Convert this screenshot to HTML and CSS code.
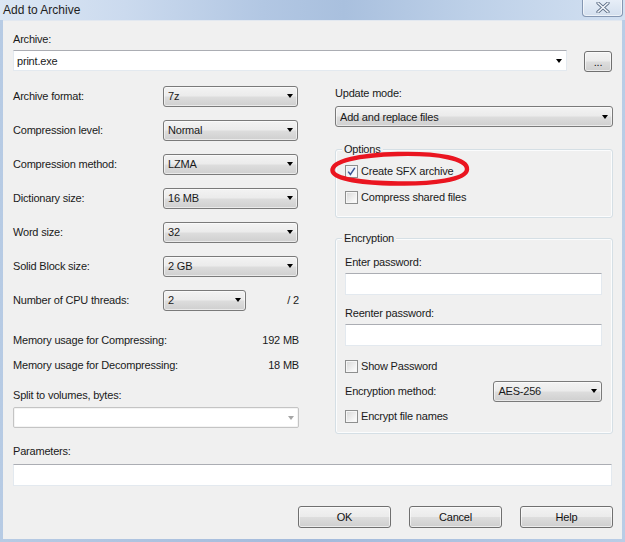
FILE: index.html
```html
<!DOCTYPE html>
<html>
<head>
<meta charset="utf-8">
<link rel="stylesheet" href="styles.css">
</head>
<body>
<div class="window">
  <div class="titlebar">
    <span class="title">Add to Archive</span>
    <div class="close">
      <svg width="14" height="11" viewBox="0 0 14 11"><path d="M2 1 L12 10 M12 1 L2 10" stroke="#5b6c84" stroke-width="3.2" stroke-linecap="round"/><path d="M2 1 L12 10 M12 1 L2 10" stroke="#f4f7fb" stroke-width="1.6" stroke-linecap="round"/></svg>
    </div>
  </div>
  <div class="client">
    <div class="label archive-label">Archive:</div>
    <div class="archive-row">
      <div class="combo edit archive-combo"><span>print.exe</span><i class="arrow"></i></div>
      <div class="btn dots">...</div>
    </div>
    <div class="columns">
      <div class="left">
        <div class="row"><span>Archive format:</span><div class="combo list lc"><span>7z</span><i class="arrow"></i></div></div>
        <div class="row"><span>Compression level:</span><div class="combo list lc"><span>Normal</span><i class="arrow"></i></div></div>
        <div class="row"><span>Compression method:</span><div class="combo list lc"><span>LZMA</span><i class="arrow"></i></div></div>
        <div class="row"><span>Dictionary size:</span><div class="combo list lc"><span>16 MB</span><i class="arrow"></i></div></div>
        <div class="row"><span>Word size:</span><div class="combo list lc"><span>32</span><i class="arrow"></i></div></div>
        <div class="row"><span>Solid Block size:</span><div class="combo list lc"><span>2 GB</span><i class="arrow"></i></div></div>
        <div class="row cpu"><span>Number of CPU threads:</span><div class="combo list cpuc"><span>2</span><i class="arrow"></i></div><span class="of">/ 2</span></div>
        <div class="mem first"><span>Memory usage for Compressing:</span><span>192 MB</span></div>
        <div class="mem"><span>Memory usage for Decompressing:</span><span>18 MB</span></div>
        <div class="label split-label">Split to volumes, bytes:</div>
        <div class="combo disabled split"><span></span><i class="arrow grey"></i></div>
      </div>
      <div class="right">
        <div class="label update-label">Update mode:</div>
        <div class="combo list update"><span>Add and replace files</span><i class="arrow"></i></div>
        <div class="group options">
          <span class="legend">Options</span>
          <div class="check-row"><i class="cb checked"><svg width="11" height="11" viewBox="0 0 11 11"><path d="M2.2 5.6 L4.4 8.4 L8.8 1.8" fill="none" stroke="#3a5595" stroke-width="1.5"/></svg></i><span>Create SFX archive</span></div>
          <div class="check-row"><i class="cb"></i><span>Compress shared files</span></div>
        </div>
        <div class="group encryption">
          <span class="legend">Encryption</span>
          <div class="label">Enter password:</div>
          <div class="input pw"></div>
          <div class="label re-label">Reenter password:</div>
          <div class="input pw"></div>
          <div class="check-row show"><i class="cb"></i><span>Show Password</span></div>
          <div class="method-row"><span>Encryption method:</span><div class="combo list method"><span>AES-256</span><i class="arrow"></i></div></div>
          <div class="check-row names"><i class="cb"></i><span>Encrypt file names</span></div>
        </div>
      </div>
    </div>
    <div class="label params-label">Parameters:</div>
    <div class="input params"></div>
    <div class="buttons">
      <div class="btn push">OK</div>
      <div class="btn push">Cancel</div>
      <div class="btn push">Help</div>
    </div>
  </div>
  <svg class="annotation" width="625" height="542" viewBox="0 0 625 542">
    <path d="M 398 154 C 438 153, 468 158.5, 467 169.5 C 466 180, 432 184, 398 183.5 C 361 183, 333 179, 332.5 170.5 C 332 161, 358 155, 398 154 Z" fill="none" stroke="#ea1520" stroke-width="4.4"/>
  </svg>
</div>
</body>
</html>
```

FILE: styles.css
```css
* { box-sizing: border-box; }
html, body { margin: 0; padding: 0; background: #f0f0f0; }
body {
  font-family: "Liberation Sans", Arial, sans-serif;
  font-size: 11px;
  letter-spacing: -0.2px;
  color: #1a1a1a;
}
.window {
  position: relative;
  width: 625px;
  height: 542px;
  overflow: hidden;
  background: linear-gradient(to right, #b7cbe4, #a3badb 50%, #b9cde6);
  display: flex;
  flex-direction: column;
}
.titlebar {
  height: 20px;
  flex: none;
  position: relative;
  background: linear-gradient(to right, #dce7f4 0%, #cbdaee 20%, #b2c7e3 42%, #a9c0de 55%, #bdd0e8 75%, #d2e0f1 100%);
  display: flex;
  align-items: center;
  padding-left: 3px;
}
.title { font-size: 12px; letter-spacing: 0; color: #1e1e1e; }
.close {
  position: absolute;
  left: 582px;
  top: -1px;
  width: 41px;
  height: 18px;
  border: 1px solid #8597b2;
  border-top: none;
  border-radius: 0 0 4px 4px;
  background: linear-gradient(#e8eff8, #d3dfee);
  box-shadow: inset 0 0 0 1px rgba(255,255,255,0.6);
  display: flex;
  align-items: center;
  justify-content: center;
}
.client {
  flex: 1;
  margin: 0 3px 3px 3px;
  background: #f0f0f0;
  border-top: 1px solid #e2e8f0;
  padding: 10px 9px 0 10px;
  display: flex;
  flex-direction: column;
}
.label { line-height: 16px; height: 16px; white-space: nowrap; }
.archive-row { display: flex; align-items: flex-start; margin-top: 3px; }
.combo {
  display: flex;
  align-items: center;
  height: 21px;
  padding: 0 4px 0 4px;
  white-space: nowrap;
}
.combo > span { flex: 1; overflow: hidden; }
.combo.list {
  border: 1px solid #7a7a7a;
  border-radius: 3px;
  background: linear-gradient(#f3f3f3 0%, #ebebeb 48%, #dddddd 52%, #cfcfcf 100%);
  box-shadow: inset 0 0 0 1px rgba(255,255,255,0.55);
}
.combo.edit {
  background: #fff;
  border: 1px solid #e3e9ef;
  border-top-color: #abadb3;
  padding-left: 3px;
}
.archive-combo { width: 554px; }
.dots {
  margin-left: 17px;
  margin-top: 1px;
  width: 28px;
  height: 21px;
  line-height: 16px;
}
.btn {
  border: 1px solid #707070;
  border-radius: 3px;
  background: linear-gradient(#f3f3f3 0%, #ebebeb 48%, #dddddd 52%, #cfcfcf 100%);
  box-shadow: inset 0 0 0 1px rgba(255,255,255,0.6);
  display: flex;
  align-items: center;
  justify-content: center;
  color: #111;
}
.arrow {
  flex: none;
  width: 0;
  height: 0;
  border-left: 3.5px solid transparent;
  border-right: 3.5px solid transparent;
  border-top: 4px solid #000;
  margin-right: 0;
}
.arrow.grey { border-top-color: #a6a6a6; }
.columns { display: flex; margin-top: 7px; gap: 36px; }
.left { width: 286px; display: flex; flex-direction: column; }
.right { width: 278px; display: flex; flex-direction: column; padding-top: 6px; }
.row { height: 34px; display: flex; align-items: center; }
.row > span:first-child { width: 150px; }
.lc { width: 135px; }
.cpuc { width: 83px; flex: none; }
.cpu .of { margin-left: auto; }
.mem { height: 25px; display: flex; align-items: center; justify-content: space-between; }
.mem.first { margin-top: 10px; }
.split-label { margin-top: 10px; }
.combo.disabled {
  margin-top: 4px;
  border: 1px solid #c4c4c4;
  background: #fff;
  box-shadow: inset 0 0 0 1px #f4f4f4;
  border-radius: 2px;
  width: 286px;
}
.update { margin-top: 5px; width: 278px; }
.group {
  position: relative;
  border: 1px solid #d5dfe5;
  border-radius: 3px;
  box-shadow: inset 0 0 0 1px #fbfcfd;
}
.legend {
  position: absolute;
  top: -9px;
  left: 6px;
  padding: 0 2px;
  background: #f0f0f0;
  line-height: 16px;
}
.options { margin-top: 22px; height: 69px; padding: 8px 9px 0 9px; }
.check-row { display: flex; align-items: center; height: 26px; }
.check-row span { margin-left: 3px; }
.cb {
  width: 13px;
  height: 13px;
  flex: none;
  border: 1px solid #8e8f8f;
  background: linear-gradient(135deg, #d7d7d7, #f4f4f4 70%, #ffffff);
  box-shadow: inset 0 0 0 1px #f6f6f6;
  display: flex;
  align-items: center;
  justify-content: center;
}
.cb.checked { background: linear-gradient(135deg, #dfe6f2, #f6f8fb 70%, #ffffff); }
.encryption { margin-top: 20px; padding: 15px 10px 5px 9px; display: flex; flex-direction: column; }
.input {
  background: #fff;
  border: 1px solid #e3e9ef;
  border-top-color: #abadb3;
  height: 22px;
}
.pw { margin-top: 3px; }
.re-label { margin-top: 10px; }
.show { margin-top: 8px; height: 24px; }
.method-row { display: flex; align-items: center; height: 26px; }
.method-row > span { width: 149px; }
.method { width: 109px; }
.names { height: 24px; }
.params-label { margin-top: 9px; }
.params { margin-top: 5px; margin-right: 1px; }
.buttons { display: flex; justify-content: flex-end; gap: 18px; margin-top: 20px; }
.push { width: 93px; height: 22px; }
.annotation { position: absolute; left: 0; top: 0; pointer-events: none; }
```
